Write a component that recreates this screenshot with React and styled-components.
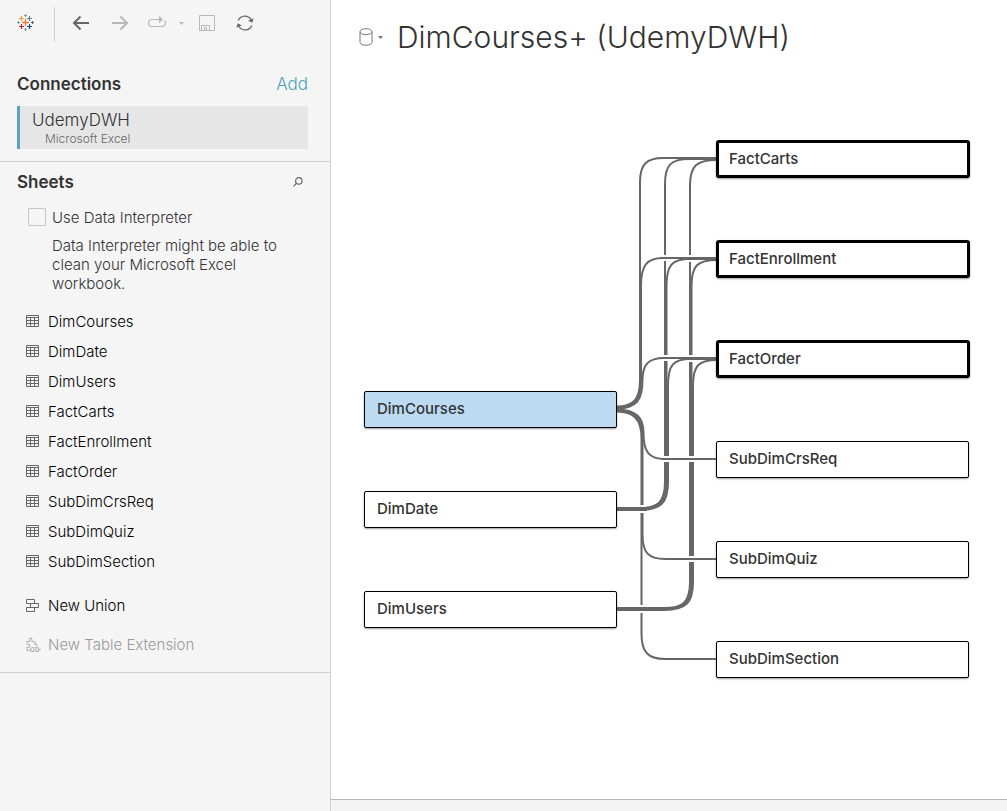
import React from "react";
import styled, { createGlobalStyle } from "styled-components";

const GlobalStyle = createGlobalStyle`
  * { box-sizing: border-box; }
  body {
    margin: 0;
    background: #f5f5f5;
    color: #333;
    font-family: Inter, "Liberation Sans", sans-serif;
    font-size: 15px;
  }
  button { font: inherit; color: inherit; }
`;

const Page = styled.div`
  display: grid;
  grid-template-columns: 331px 1fr;
  min-height: 100vh;
`;

const Sidebar = styled.aside`
  border-right: 1px solid #d0d0d0;
  background: #f5f5f5;
`;

const Toolbar = styled.div`
  display: flex;
  align-items: center;
  height: 46px;
  padding-left: 14px;
`;

const ToolDivider = styled.span`
  width: 1px;
  height: 35px;
  margin: 2px 14px 0 16px;
  background: #d0d0d0;
`;

const ToolGroup = styled.div`
  display: flex;
  align-items: center;
  gap: ${(p) => p.$gap}px;
  margin-left: ${(p) => p.$start || 0}px;
`;

const IconButton = styled.button`
  display: flex;
  align-items: center;
  justify-content: center;
  width: ${(p) => p.$width || 24}px;
  height: 24px;
  padding: 0;
  border: 0;
  background: none;
  color: ${(p) => (p.disabled ? "#b8b8b8" : "#666")};
`;

const Section = styled.section`
  padding: ${(p) => p.$pad};
  border-bottom: 1px solid #d0d0d0;
`;

const SectionHeader = styled.div`
  display: flex;
  align-items: center;
  justify-content: space-between;
  height: 24px;
`;

const SectionTitle = styled.h2`
  margin: 0;
  font-size: 17px;
  font-weight: 600;
`;

const AddLink = styled.a`
  color: #4e9fba;
  font-size: 17px;
  font-weight: 300;
  text-decoration: none;
`;

const Connection = styled.button`
  display: block;
  width: 100%;
  height: 43px;
  margin-top: 10px;
  padding: 0 0 0 12px;
  border: 0;
  border-left: 3px solid #5ba3c6;
  background: #e6e6e6;
  text-align: left;
`;

const ConnectionName = styled.span`
  display: block;
  font-size: 17px;
  line-height: 22px;
  font-weight: 300;
`;

const ConnectionKind = styled.span`
  display: block;
  padding-left: 13px;
  color: #666;
  font-size: 12px;
  line-height: 16px;
  font-weight: 300;
`;

const CheckLabel = styled.label`
  display: flex;
  align-items: center;
  gap: 6px;
  height: 20px;
  margin: 13px 0 0 11px;
  color: #333;
  font-size: 15px;
  font-weight: 300;
`;

const Checkbox = styled.input`
  appearance: none;
  width: 18px;
  height: 18px;
  margin: 0;
  border: 1px solid #c6c6c6;
  border-radius: 1px;
`;

const Hint = styled.p`
  width: 240px;
  margin: 9px 0 0 35px;
  color: #333;
  font-size: 15px;
  line-height: 19px;
  font-weight: 300;
`;

const SheetList = styled.ul`
  margin: 13px 0 0;
  padding: 0 0 0 9px;
  list-style: none;
`;

const SheetButton = styled.button`
  display: flex;
  align-items: center;
  gap: 9px;
  height: 30px;
  padding: 0;
  margin: ${(p) => p.$margin || 0};
  border: 0;
  background: none;
  color: ${(p) => (p.disabled ? "#999" : "#000")};
  font-size: 15px;
  font-weight: 300;
  svg {
    overflow: visible;
    color: ${(p) => (p.disabled ? "#b4b4b4" : "#666")};
  }
`;

const Main = styled.main`
  display: flex;
  flex-direction: column;
  min-width: 0;
  background: #fff;
`;

const Header = styled.header`
  display: flex;
  align-items: center;
  gap: 14px;
  height: 74px;
  padding-left: 28px;
`;

const SourceButton = styled.button`
  display: flex;
  align-items: center;
  gap: 5px;
  padding: 0;
  border: 0;
  background: none;
  color: #777;
`;

const Title = styled.h1`
  margin: 0;
  font-size: 30px;
  font-weight: 300;
  white-space: nowrap;
`;

const Canvas = styled.div`
  position: relative;
  flex: 1;
  min-height: 620px;
`;

const Links = styled.svg`
  position: absolute;
  left: 0;
  top: 0;
`;

const Node = styled.button`
  position: absolute;
  left: ${(p) => p.$x}px;
  top: ${(p) => p.$y}px;
  width: ${(p) => (p.$fact ? 254 : 253)}px;
  height: ${(p) => (p.$fact ? 38 : 37)}px;
  padding: 0 0 2px ${(p) => (p.$fact ? 10 : 12)}px;
  border: ${(p) => (p.$fact ? "3px solid #000" : "1px solid #000")};
  border-radius: ${(p) => (p.$fact ? 3 : 2)}px;
  background: ${(p) => (p.$selected ? "#bddaf3" : "#fff")};
  box-shadow: 0 1px 2px rgba(0, 0, 0, 0.4);
  font-size: 15px;
  font-weight: 500;
  text-align: left;
`;

const StatusBar = styled.footer`
  height: 12px;
  border-top: 1px solid #b8b8b8;
  background: #f4f4f4;
`;

const Mark = ({ x, y, r, c, w = 1 }) => (
  <path d={`M${x - r} ${y}H${x + r}M${x} ${y - r}V${y + r}`} stroke={c} strokeWidth={w} />
);

const LogoIcon = () => (
  <svg width="18" height="18" viewBox="0 0 18 18" aria-hidden="true">
    <Mark x={8.5} y={8.5} r={3.5} c="#eb7a35" w={1.3} />
    <Mark x={4.5} y={4.5} r={2.5} c="#e8a03d" w={1.2} />
    <Mark x={12.5} y={4.5} r={2.5} c="#5b879b" w={1.2} />
    <Mark x={4.5} y={12.5} r={2.5} c="#c72037" w={1.2} />
    <Mark x={12.5} y={12.5} r={2.5} c="#1f457e" w={1.2} />
    <Mark x={8.5} y={1.5} r={1.5} c="#7f9fb1" />
    <Mark x={8.5} y={15.5} r={1.5} c="#8a9fb0" />
    <Mark x={1.5} y={8.5} r={1.5} c="#6aa5af" />
    <Mark x={15.5} y={8.5} r={1.5} c="#5a6591" />
  </svg>
);

const ArrowIcon = ({ flip }) => (
  <svg width="18" height="16" viewBox="0 0 18 16" fill="none" stroke="currentColor" strokeWidth="2" aria-hidden="true">
    <path d={flip ? "M2 8H17M10.500 1.500L17 8L10.500 14.500" : "M17 8H2M8.500 1.500L2 8L8.500 14.500"} />
  </svg>
);

const ReplayIcon = () => (
  <svg width="20" height="16" viewBox="0 0 20 16" fill="none" stroke="currentColor" strokeWidth="1.200" aria-hidden="true">
    <path d="M13 4.500H5A3.500 3.500 0 0 0 5 11.500H15A3.500 3.500 0 0 0 17.500 5.500" />
    <path d="M12 1L16 4.500L12 8Z" fill="currentColor" stroke="none" />
  </svg>
);

const CaretIcon = () => (
  <svg width="5" height="3" viewBox="0 0 5 3" fill="currentColor" aria-hidden="true">
    <path d="M0 0H5L2.500 3Z" />
  </svg>
);

const SaveIcon = () => (
  <svg width="16" height="16" viewBox="0 0 16 16" fill="none" stroke="currentColor" aria-hidden="true">
    <path d="M.5 .5H15.500V15.500H.5ZM2.500 15.500V10.500H10.500V15.500M5.500 15.500V12.500H7.500V15.500" />
  </svg>
);

const RefreshIcon = () => (
  <svg width="18" height="18" viewBox="0 0 18 18" fill="none" stroke="currentColor" strokeWidth="1.300" aria-hidden="true">
    <path d="M2.200 6.500A7.200 7.200 0 0 1 15 5.500M15.800 11.500A7.200 7.200 0 0 1 3 12.500" />
    <path d="M17.500 4.200L16.300 8.800L12.200 6.600ZM.5 13.800L1.700 9.200L5.800 11.400Z" fill="currentColor" stroke="none" />
  </svg>
);

const SearchIcon = () => (
  <svg width="10" height="10" viewBox="0 0 10 10" fill="none" stroke="currentColor" strokeWidth="1.200" aria-hidden="true">
    <circle cx="5.800" cy="3.900" r="3.200" />
    <path d="M3.500 6.200L.5 9.300" />
  </svg>
);

const TableIcon = () => (
  <svg width="13" height="12" viewBox="0 0 13 12" fill="none" stroke="currentColor" aria-hidden="true">
    <path d="M.5 .5H12.500V11.500H.5ZM.5 2.500H12.500M.5 5.500H12.500M.5 8.500H12.500M4.500 2.500V11.500M8.500 2.500V11.500" />
  </svg>
);

const UnionIcon = () => (
  <svg width="13" height="13" viewBox="0 0 13 13" fill="none" stroke="currentColor" aria-hidden="true">
    <path d="M4.500 4.500H.5V.5H8.500V4.500M4.500 4.500H12.500V8.500H4.500ZM.5 8.500H8.500V12.500H.5Z" />
  </svg>
);

const ExtensionIcon = () => (
  <svg width="13" height="13" viewBox="0 0 13 13" fill="none" stroke="currentColor" strokeWidth="1.100" aria-hidden="true">
    <path d="M3.500 12.500H1V9.500C4.500 9.500 4.500 6 1 6V3.500H3.500C2.500 -1 6.500 -1 6 3.500L9 4V6.500C11 6 11.500 7.500 10.500 8.500" />
    <path d="M8 9.500V13.500H6.500C4 13.500 4 9.500 6.500 9.500ZM10 9.500H11C13.500 9.500 13.500 13.500 11 13.500H10ZM13 11.500H15M3.500 11.500H4.500" />
  </svg>
);

const DatabaseIcon = () => (
  <svg width="14" height="18" viewBox="0 0 14 18" fill="none" stroke="currentColor" aria-hidden="true">
    <ellipse cx="7" cy="3.700" rx="6" ry="3" />
    <path d="M1 3.700V14.300C1 18.200 13 18.200 13 14.300V3.700" />
  </svg>
);

const sheets = [
  "DimCourses", "DimDate", "DimUsers", "FactCarts", "FactEnrollment",
  "FactOrder", "SubDimCrsReq", "SubDimQuiz", "SubDimSection",
];

const nodes = [
  { name: "DimCourses", x: 33, y: 317, selected: true },
  { name: "DimDate", x: 33, y: 417 },
  { name: "DimUsers", x: 33, y: 517 },
  { name: "FactCarts", x: 385, y: 66, fact: true },
  { name: "FactEnrollment", x: 385, y: 166, fact: true },
  { name: "FactOrder", x: 385, y: 266, fact: true },
  { name: "SubDimCrsReq", x: 385, y: 367 },
  { name: "SubDimQuiz", x: 385, y: 467 },
  { name: "SubDimSection", x: 385, y: 567 },
];

const links = [
  // DimCourses to the fact tables
  "M286 332.500C302 332 309 326 309 306V108C309 90 316 84 332 84H386",
  "M286 333.500C304 333 310 326 310 306V212C310 191 316 184 332 184H386",
  "M286 334.500C306 334 311.500 326 311.500 306C311.500 291 317 284 333 284H386",
  // DimDate to the fact tables
  "M286 434H308C326 434 334 429 334 408V110C334 91 340 85 358 85H386",
  "M286 435H308C328 435 335.500 429 335.500 408V212C335.500 191 341 185 359 185H386",
  "M286 436H308C330 436 337 429 337 408V312C337 291 342 285 360 285H386",
  // DimUsers to the fact tables
  "M286 534H333C351 534 359 529 359 508V112C359 92 365 86 386 86",
  "M286 535H333C353 535 360.500 529 360.500 508V212C360.500 192 366 186 386 186",
  "M286 536H333C355 536 362 529 362 508V312C362 292 367 286 386 286",
  // DimCourses to the sub-dimensions
  "M286 335.500C306 336 312.500 344 312.500 359C312.500 378 318 385 334 385H386",
  "M286 336.500C304 337 311.500 344 311.500 362V461C311.500 478 317 485 334 485H386",
  "M286 337.500C302 338 310.500 344 310.500 364V560C310.500 578 317 585 334 585H386",
];

const crossings = [
  { x: 334, y: 184, w: 2 }, { x: 359, y: 184.5, w: 3 },
  { x: 335, y: 284, w: 2 }, { x: 360, y: 284.5, w: 3 },
  { x: 335, y: 385, w: 2 }, { x: 360, y: 385, w: 2 },
  { x: 360, y: 485, w: 2 },
  { x: 311, y: 435, w: 4 }, { x: 311, y: 535, w: 4 },
];

const LinkLayer = () => (
  <Links width="400" height="600" fill="none" stroke="#666" strokeWidth="2" aria-hidden="true">
    {links.map((d) => <path key={d} d={d} />)}
    {crossings.map(({ x, y, w }) => (
      <g key={`${x}-${y}`}>
        <path d={`M${x - 4} ${y}H${x + 4}`} stroke="#fff" strokeWidth={w + 4} />
        <path d={`M${x - 5} ${y}H${x + 5}`} strokeWidth={w} />
      </g>
    ))}
  </Links>
);

export default function App() {
  return (
    <Page>
      <GlobalStyle />
      <Sidebar>
        <Toolbar>
          <IconButton aria-label="Start page"><LogoIcon /></IconButton>
          <ToolDivider />
          <ToolGroup $gap={14}>
            <IconButton aria-label="Undo"><ArrowIcon /></IconButton>
            <IconButton aria-label="Redo" disabled><ArrowIcon flip /></IconButton>
            <ToolGroup $gap={5}>
              <IconButton aria-label="Replay" disabled><ReplayIcon /></IconButton>
              <IconButton aria-label="Replay options" disabled $width={14}><CaretIcon /></IconButton>
            </ToolGroup>
          </ToolGroup>
          <ToolGroup $gap={14} $start={7}>
            <IconButton aria-label="Save" disabled><SaveIcon /></IconButton>
            <IconButton aria-label="Refresh"><RefreshIcon /></IconButton>
          </ToolGroup>
        </Toolbar>

        <Section $pad="26px 22px 12px 17px">
          <SectionHeader>
            <SectionTitle>Connections</SectionTitle>
            <AddLink href="#add">Add</AddLink>
          </SectionHeader>
          <Connection>
            <ConnectionName>UdemyDWH</ConnectionName>
            <ConnectionKind>Microsoft Excel</ConnectionKind>
          </Connection>
        </Section>

        <Section $pad="8px 22px 13px 17px">
          <SectionHeader>
            <SectionTitle>Sheets</SectionTitle>
            <IconButton aria-label="Search sheets" $width={20}><SearchIcon /></IconButton>
          </SectionHeader>
          <CheckLabel>
            <Checkbox type="checkbox" />
            Use Data Interpreter
          </CheckLabel>
          <Hint>Data Interpreter might be able to clean your Microsoft Excel workbook.</Hint>
          <SheetList>
            {sheets.map((name) => (
              <li key={name}>
                <SheetButton><TableIcon />{name}</SheetButton>
              </li>
            ))}
            <li><SheetButton $margin="14px 0 9px"><UnionIcon />New Union</SheetButton></li>
            <li><SheetButton disabled><ExtensionIcon />New Table Extension</SheetButton></li>
          </SheetList>
        </Section>
      </Sidebar>

      <Main>
        <Header>
          <SourceButton aria-label="Data source options"><DatabaseIcon /><CaretIcon /></SourceButton>
          <Title>DimCourses+ (UdemyDWH)</Title>
        </Header>
        <Canvas>
          <LinkLayer />
          {nodes.map((n) => (
            <Node key={n.name} $x={n.x} $y={n.y} $fact={n.fact} $selected={n.selected}>{n.name}</Node>
          ))}
        </Canvas>
        <StatusBar />
      </Main>
    </Page>
  );
}
